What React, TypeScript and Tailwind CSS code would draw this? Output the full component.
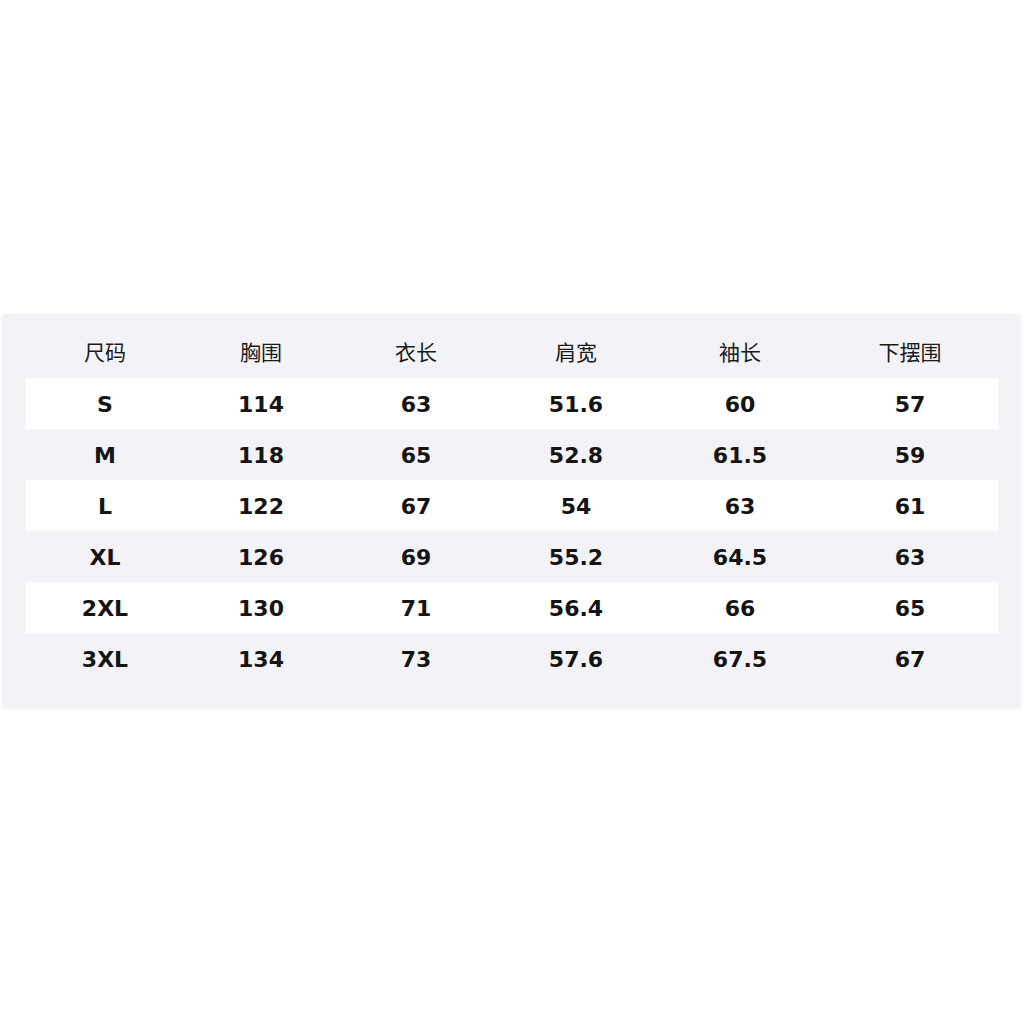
import React from "react";

const headers = ["尺码", "胸围", "衣长", "肩宽", "袖长", "下摆围"];
const rows = [
  ["S", "114", "63", "51.6", "60", "57"],
  ["M", "118", "65", "52.8", "61.5", "59"],
  ["L", "122", "67", "54", "63", "61"],
  ["XL", "126", "69", "55.2", "64.5", "63"],
  ["2XL", "130", "71", "56.4", "66", "65"],
  ["3XL", "134", "73", "57.6", "67.5", "67"],
];

const grid = "grid grid-cols-[158px_154px_156px_164px_164px_176px]";

export default function App() {
  return (
    <div
      className="w-[1024px] h-[1024px] bg-white pt-[314px] pl-[2px]"
      style={{ fontFamily: '"DejaVu Sans", "Noto Sans CJK SC", sans-serif' }}
    >
      <div className="w-[1019px] bg-[#f3f3f7] pl-[24px] pr-[23px] pt-[12px] pb-[25px]">
        <div className={`${grid} h-[52px] items-center text-[21px] text-[#1a1a1a]`}>
          {headers.map((h) => (
            <div key={h} className="text-center" style={{ fontFamily: '"Noto Sans CJK SC", sans-serif' }}>
              {h}
            </div>
          ))}
        </div>
        {rows.map((r, i) => (
          <div
            key={r[0]}
            className={`${grid} h-[51px] items-center text-[22px] font-bold text-[#141414] ${
              i % 2 === 0 ? "bg-white" : ""
            }`}
          >
            {r.map((c, j) => (
              <div key={j} className="text-center pt-[1px]">
                {c}
              </div>
            ))}
          </div>
        ))}
      </div>
    </div>
  );
}
